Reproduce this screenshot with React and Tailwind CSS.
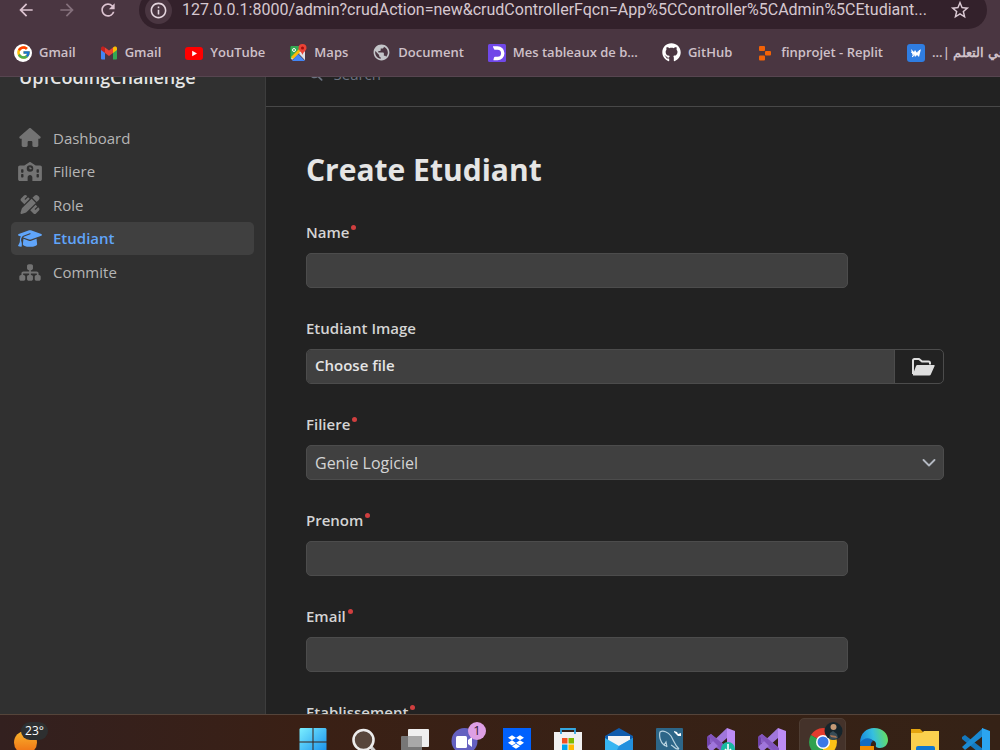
import clsx from 'clsx';
import { FaDropbox, FaGithub, FaGraduationCap, FaHouse, FaMagnifyingGlass, FaPenRuler, FaSchool, FaSitemap } from 'react-icons/fa6';
import { FcGoogle } from 'react-icons/fc';
import { MdArrowBack, MdArrowForward, MdInfoOutline, MdPublic, MdRefresh, MdStarOutline } from 'react-icons/md';

const GoogleIcon = () => (
    <span className="flex size-[18px] items-center justify-center rounded-full bg-white">
        <FcGoogle className="size-[15px]" />
    </span>
);

const GmailIcon = () => (
    <svg viewBox="0 0 18 18" className="size-[18px]">
        <path d="M1 5v9.5a1 1 0 0 0 1 1h3V8z" fill="#4285f4" />
        <path d="M17 5v9.5a1 1 0 0 1-1 1h-3V8z" fill="#34a853" />
        <path d="M1 6V4.2C1 2.6 2.8 2 4 2.8L5 3.6V9L1 6z" fill="#c5221f" />
        <path d="M17 6V4.2c0-1.600-1.800-2.200-3-1.400l-1 .8V9l4-3z" fill="#fbbc04" />
        <path d="M5 3.600l4 3 4-3V9l-4 3-4-3z" fill="#ea4335" />
    </svg>
);

const YouTubeIcon = () => (
    <svg viewBox="0 0 18 18" className="size-[18px]">
        <rect y="3" width="18" height="13" rx="3" fill="#f00" />
        <path d="M7.200 6.700v5.600l4.800-2.800z" fill="#fff" />
    </svg>
);

const MapsIcon = () => (
    <svg viewBox="0 0 18 18" className="size-[18px]">
        <path d="M2 2h11L2 14z" fill="#34a853" />
        <path d="M1 15V3l1-1v13z" fill="#1e8e3e" />
        <path d="M2 14L13 4l3 4v8l-6-7-7 7z" fill="#e8eaed" />
        <path d="M9 10l7 7H3z" fill="#4285f4" />
        <path d="M2 13L12 3l2 2L4 15z" fill="#fbbc04" />
        <path d="M10 10l6-3v9z" fill="#dfe1e5" />
        <circle cx="5" cy="6" r="1.500" fill="none" stroke="#fff" />
        <path d="M13.500 0a4 4 0 0 1 4 4c0 2.500-3 3.500-4 7-1-3.500-4-4.500-4-7a4 4 0 0 1 4-4z" fill="#ea4335" />
        <circle cx="13.500" cy="4" r="1.500" fill="#a50e0e" />
    </svg>
);

const TableauxIcon = () => (
    <svg viewBox="0 0 18 18" className="size-[18px]">
        <rect width="18" height="18" rx="1.500" fill="#7048e8" />
        <path d="M5 4h4.500a5 5 0 0 1 0 10.500H5.500" fill="none" stroke="#fff" strokeWidth="3.400" />
        <path d="M4 1v16l3-5V7z" fill="#7048e8" />
    </svg>
);

const ReplitIcon = () => (
    <svg viewBox="0 0 18 18" className="size-[18px]">
        <g fill="#f26207">
            <rect x="3" y="2" width="6" height="5" rx="1" />
            <rect x="9" y="7" width="6" height="4.500" rx="1" />
            <rect x="3" y="11.500" width="6" height="5" rx="1" />
        </g>
    </svg>
);

const CourseIcon = () => (
    <svg viewBox="0 0 18 18" className="size-[18px]">
        <rect width="18" height="18" rx="3" fill="#2f7de1" />
        <path d="M4 5l3 3 1-2 2 3 4-4-2 8-2-2-2 2-1-3-1 3z" fill="#fff" />
        <path d="M4 8l2 1M5 13l8-7" stroke="#fff" />
    </svg>
);

const bookmarks = [
    { label: 'Gmail', icon: <GoogleIcon /> },
    { label: 'Gmail', icon: <GmailIcon /> },
    { label: 'YouTube', icon: <YouTubeIcon /> },
    { label: 'Maps', icon: <MapsIcon /> },
    { label: 'Document', icon: <MdPublic className="size-[19px] text-[#c3c5c8]" /> },
    { label: 'Mes tableaux de b...', icon: <TableauxIcon /> },
    { label: 'GitHub', icon: <FaGithub className="size-[19px] text-white" /> },
    { label: 'finprojet - Replit', icon: <ReplitIcon /> },
    { label: 'في التعلم |...', icon: <CourseIcon />, rtl: true },
];

const BrowserBar = () => (
    <header className="shrink-0 overflow-hidden border-b border-[#574550] bg-[#4a3641]">
        <div className="-mt-[9px] flex h-[38px] items-center pr-[13px]">
            <div className="flex w-[139px] shrink-0 items-center gap-[21px] pl-[16px] text-[#dcc3d0]">
                <button aria-label="Back"><MdArrowBack className="size-5" /></button>
                <button aria-label="Forward" className="text-[#85717c]"><MdArrowForward className="size-5" /></button>
                <button aria-label="Reload"><MdRefresh className="size-5" /></button>
            </div>
            <div className="flex h-full min-w-0 flex-1 items-center rounded-full bg-[#33212b] pr-4 pl-1.5">
                <button aria-label="Site information" className="flex size-[27px] shrink-0 items-center justify-center rounded-full bg-[#4a3641] text-[#e4d6de]">
                    <MdInfoOutline className="size-[19px]" />
                </button>
                <input
                    aria-label="Address"
                    readOnly
                    value="127.0.0.1:8000/admin?crudAction=new&crudControllerFqcn=App%5CController%5CAdmin%5CEtudiant..."
                    className="ml-[10px] min-w-0 flex-1 bg-transparent font-[Roboto,sans-serif] text-[16px] text-[#d6c8d0] outline-none"
                />
                <button aria-label="Bookmark this page" className="text-[#dccbd5]"><MdStarOutline className="size-[22px]" /></button>
            </div>
        </div>
        <nav aria-label="Bookmarks" className="flex h-[47px] items-center gap-6 pl-[14px] text-[13px] font-semibold text-[#cfc1c9]">
            {bookmarks.map(({ label, icon, rtl }, i) => (
                <a key={i} href="#" className="flex shrink-0 items-center gap-[7px] whitespace-nowrap">
                    {icon}
                    <span dir={rtl ? 'rtl' : 'ltr'}>{label}</span>
                </a>
            ))}
        </nav>
    </header>
);

const menu = [
    { label: 'Dashboard', Icon: FaHouse },
    { label: 'Filiere', Icon: FaSchool },
    { label: 'Role', Icon: FaPenRuler },
    { label: 'Etudiant', Icon: FaGraduationCap, active: true },
    { label: 'Commite', Icon: FaSitemap },
];

const Sidebar = () => (
    <aside className="w-[266px] shrink-0 border-r border-[#3d3d3d] bg-[#303030] px-[11px]">
        <a href="#" className="-mt-3 block pl-2 text-[18px] leading-6 font-semibold text-[#e5e5e5]">UpfCodingChallenge</a>
        <nav className="mt-8 flex h-[168px] flex-col">
            {menu.map(({ label, Icon, active }) => (
                <a
                    key={label}
                    href="#"
                    className={clsx(
                        'flex flex-1 items-center gap-[11px] rounded-[5px] pl-[7px] text-[15px]',
                        active ? 'bg-[#404040] font-semibold text-[#60a5fa]' : 'text-[#b5b5b5]'
                    )}
                >
                    <Icon className={clsx('h-[19px] w-6 shrink-0', !active && 'text-[#737373]')} />
                    {label}
                </a>
            ))}
        </nav>
    </aside>
);

const Label = ({ htmlFor, required, children }) => (
    <label htmlFor={htmlFor} className="flex h-[22px] items-center text-[15px] font-semibold text-[#d4d4d4]">
        {children}
        {required && <span className="mb-[9px] ml-[2px] size-[5px] rounded-full bg-[#d03f3f]" />}
    </label>
);

const TextField = ({ id, label }) => (
    <div className="flex flex-col gap-[10px]">
        <Label htmlFor={id} required>{label}</Label>
        <input id={id} type="text" className="h-[35px] w-[85%] rounded-[5px] border border-[#4c4c4c] bg-[#404040] px-2 text-[16px] text-[#e5e5e5] outline-none" />
    </div>
);

const EtudiantForm = () => (
    <form className="mt-[30px] flex flex-col gap-[29px]">
        <TextField id="name" label="Name" />
        <div className="flex flex-col gap-[10px]">
            <Label htmlFor="image">Etudiant Image</Label>
            <div className="flex h-[35px] overflow-hidden rounded-[5px] border border-[#4c4c4c]">
                <button id="image" type="button" className="flex-1 bg-[#404040] px-2 pb-[2px] text-left text-[15px] font-semibold text-[#e5e5e5]">Choose file</button>
                <button type="button" aria-label="Browse" className="flex w-[49px] items-center justify-center border-l border-[#4c4c4c] pl-2 text-[#dedede]">
                    <svg viewBox="0 0 24 20" className="h-5 w-6">
                        <path d="M2 17V3.500Q2 2 3.500 2H8l3 2.500h6.500Q19 4.500 19 6v1.500" fill="none" stroke="currentColor" strokeWidth="2" strokeLinejoin="round" />
                        <path d="M6.500 8H23q1 0 .6 1l-3.800 8.500q-.4 1-1.500 1H2.500q-1 0-.6-1L5 9q.4-1 1.500-1z" fill="currentColor" />
                    </svg>
                </button>
            </div>
        </div>
        <div className="flex flex-col gap-[10px]">
            <Label htmlFor="filiere" required>Filiere</Label>
            <div className="grid items-center">
                <select id="filiere" className="col-start-1 row-start-1 h-[35px] appearance-none rounded-[5px] border border-[#4c4c4c] bg-[#404040] px-2 text-[16px] text-[#d4d4d4] outline-none">
                    <option>Genie Logiciel</option>
                </select>
                <svg viewBox="0 0 14 8" className="pointer-events-none col-start-1 row-start-1 mr-2 h-2 w-[14px] justify-self-end" fill="none" stroke="#b4b9c2" strokeWidth="1.800" strokeLinecap="round" strokeLinejoin="round">
                    <path d="M1.500 1l5.500 5.500L12.500 1" />
                </svg>
            </div>
        </div>
        <TextField id="prenom" label="Prenom" />
        <TextField id="email" label="Email" />
        <TextField id="etablissement" label="Etablissement" />
    </form>
);

const VsMark = () => (
    <>
        <path d="M0 9l4-3 17 14v8L0 13z" fill="#8a5fc4" />
        <path d="M0 9l3-2v13l-3-2z" fill="#6f43a8" />
        <path d="M0 19L20 0v10L4 24z" fill="#a076db" />
        <path d="M20 0l8 3v23l-8 3z" fill="#bd8cf5" />
        <path d="M1 8l3-2 17 14v8z" fill="#8355bd" />
    </>
);

const apps = [
    {
        name: 'Start',
        art: (
            <>
                <defs>
                    <linearGradient id="start" x1="0" y1="0" x2="28" y2="28" gradientUnits="userSpaceOnUse">
                        <stop stopColor="#7cf0ff" />
                        <stop offset="1" stopColor="#0f87ea" />
                    </linearGradient>
                </defs>
                <path d="M1.500 0H13.500V13.500H.5V1zM14.500 0H26.500l1 1V13.500H14.500zM.5 14.500H13.500V27.500H.5zM14.500 14.500H27.500V27.500H14.500z" fill="url(#start)" />
            </>
        ),
    },
    {
        name: 'Search',
        art: (
            <>
                <path d="M20 18l7 8" stroke="#c9c9c9" strokeWidth="3.500" />
                <circle cx="13.500" cy="12" r="10" fill="#57463c" stroke="#ececec" strokeWidth="2.600" />
            </>
        ),
    },
    {
        name: 'Task view',
        art: (
            <>
                <rect x="7" y="1" width="21" height="18" rx="1" fill="#efefef" />
                <rect y="8" width="21" height="18" rx="1" fill="#777" />
                <rect x="7" y="8" width="14" height="11" fill="#a8a8a8" />
            </>
        ),
    },
    {
        name: 'Chat',
        badge: '1',
        art: (
            <>
                <circle cx="12.500" cy="13" r="13" fill="#6460c0" />
                <rect x="4" y="8" width="11" height="12" rx="1.500" fill="#fff" />
                <path d="M16 12l4-3v10l-4-3z" fill="#fff" />
            </>
        ),
    },
    {
        name: 'Dropbox',
        art: (
            <>
                <rect width="28" height="28" fill="#0061fe" />
                <FaDropbox x="5" y="6" width="18" height="18" color="#fff" />
            </>
        ),
    },
    {
        name: 'Microsoft Store',
        art: (
            <>
                <path d="M0 4h28v22H0z" fill="#f1f1f1" />
                <path d="M7 6V1h14v5" fill="none" stroke="#35a7e0" strokeWidth="1.800" />
                <path d="M8 10h5.500v5.500H8z" fill="#f25022" />
                <path d="M14.500 10H20v5.500h-5.500z" fill="#7fba00" />
                <path d="M8 16.500h5.500V22H8z" fill="#00a4ef" />
                <path d="M14.500 16.500H20V22h-5.500z" fill="#ffb900" />
            </>
        ),
    },
    {
        name: 'Mail',
        art: (
            <>
                <path d="M0 8L14 0l14 8v14H0z" fill="#0f5cad" />
                <path d="M3 8h22v10H3z" fill="#f4f4f4" />
                <path d="M0 10l14 8 14-8v18H0z" fill="#36b5f2" />
                <path d="M14 18l14-8v18H9z" fill="#2390dd" />
            </>
        ),
    },
    {
        name: 'MySQL Workbench',
        art: (
            <>
                <rect width="27" height="28" rx="1" fill="#2d6688" />
                <path d="M8 17C4 14 3 8 4 4c3-2 8 0 11 4 3 5 3 8 8 13M8 17l2-3 1 5M11 19c-1-2-2-1-3-2M15 17c3 1 4 5 8 4" fill="none" stroke="#b8d3e0" strokeWidth="1.200" />
                <path d="M18 3l3 1 1 2 3-1v3h-3l-4-4z" fill="#fff" />
            </>
        ),
    },
    {
        name: 'Visual Studio Installer',
        art: (
            <>
                <VsMark />
                <circle cx="21" cy="21" r="7" fill="#19b9a3" />
                <path d="M21 16v8m-3-3l3 3 3-3" fill="none" stroke="#fff" strokeWidth="1.600" />
            </>
        ),
    },
    { name: 'Visual Studio', art: <VsMark /> },
    {
        name: 'Chrome',
        active: true,
        art: (
            <>
                <path d="M14 14L1.900 7A14 14 0 0 1 26.100 7z" fill="#e33b2e" />
                <path d="M14 14L1.900 7A14 14 0 0 0 14 28z" fill="#2fa14f" />
                <path d="M14 14L26.100 7A14 14 0 0 1 14 28z" fill="#fbc116" />
                <circle cx="14" cy="14" r="7" fill="#fff" />
                <circle cx="14" cy="14" r="5.500" fill="#3b78e7" />
                <circle cx="24.500" cy="3" r="9" fill="#16242b" />
                <path d="M20 11l1-6 3-2 4 3 1 4-4 2z" fill="#374c57" />
                <circle cx="24.500" cy="-1" r="3" fill="#c49a76" />
                <path d="M21 7l6 1 1 2-6-1z" fill="#aa7555" />
            </>
        ),
    },
    {
        name: 'Edge',
        art: (
            <>
                <defs>
                    <linearGradient id="edge" x1="0" y1="14" x2="28" y2="8" gradientUnits="userSpaceOnUse">
                        <stop stopColor="#1687dc" />
                        <stop offset=".5" stopColor="#35bfe0" />
                        <stop offset="1" stopColor="#67e05c" />
                    </linearGradient>
                </defs>
                <path d="M0 15C0 5 7 0 14 0c9 0 14 6 14 12 0 5-4 8-8 8-3 0-5-1-4-3 1-5-7-8-16-2z" fill="url(#edge)" />
                <path d="M0 15C3 9 11 9 13 13c-3 2-3 6 0 10l-5 5C3 26 0 21 0 15z" fill="#126cc0" />
                <rect y="18" width="14" height="10" fill="#f08c00" />
            </>
        ),
    },
    {
        name: 'File Explorer',
        art: (
            <>
                <path d="M0 1h9l3 3v6H0z" fill="#e5a50f" />
                <path d="M0 5h11l2-2h15v25H0z" fill="#fbd04e" />
                <rect x="5" y="18" width="19" height="10" rx="2" fill="#1177cf" />
            </>
        ),
    },
    {
        name: 'Visual Studio Code',
        art: (
            <>
                <path d="M0 9l3-2 18 14v7L0 11z" fill="#1478be" />
                <path d="M0 19L21 0v8L3 22z" fill="#1b8ad3" />
                <path d="M20 0l8 3v22l-8 3z" fill="#2ba5f1" />
            </>
        ),
    },
];

const Taskbar = () => (
    <footer className="flex h-9 shrink-0 overflow-hidden border-t border-[#55443a] bg-linear-to-r from-[#33201f] via-[#3a2015] via-30% to-[#352216]">
        <div className="w-[287px] shrink-0 pl-[14px]">
            <button aria-label="Weather" className="relative mt-4 block size-[23px] rounded-full bg-linear-to-b from-[#f7b32b] to-[#ee6c14]">
                <span className="absolute -top-[9px] left-[7px] flex h-[18px] w-[27px] items-center justify-center rounded-full bg-[#2d2f30] text-[12px] text-white">23°</span>
            </button>
        </div>
        {apps.map(({ name, art, badge, active }) => (
            <button
                key={name}
                aria-label={name}
                className="relative mt-[3px] flex h-12 w-[51px] shrink-0 justify-center"
            >
                {active && <span className="absolute inset-x-[2px] top-0 h-12 rounded-[5px] border border-[#4e3d33] bg-[#44322a]" />}
                <svg viewBox="0 0 28 28" className="relative mt-[10px] size-7 overflow-visible">{art}</svg>
                {badge && (
                    <span className="absolute top-[4px] right-[5px] flex size-[18px] items-center justify-center rounded-full bg-[#dd9fe4] text-[13px] text-[#35203a]">{badge}</span>
                )}
            </button>
        ))}
    </footer>
);

const App = () => (
    <div className="flex h-screen flex-col overflow-hidden bg-[#222] font-['Open_Sans','Noto_Sans',sans-serif]">
        <BrowserBar />
        <div className="flex min-h-0 flex-1 overflow-hidden">
            <Sidebar />
            <main className="min-w-0 flex-1">
                <div className="flex h-[30px] items-start border-b border-[#484848] pl-[43px] text-[#6b7280]">
                    <label className="-mt-[15px] flex flex-1 items-center gap-[11px]">
                        <FaMagnifyingGlass className="size-[14px]" />
                        <input type="search" placeholder="Search" className="w-full bg-transparent text-[15px] leading-6 outline-none placeholder:text-[#6b7280]" />
                    </label>
                </div>
                <div className="pt-[42px] pr-[56px] pl-[40px]">
                    <h1 className="text-[30px] leading-[42px] font-bold text-[#e5e5e5]">Create Etudiant</h1>
                    <EtudiantForm />
                </div>
            </main>
        </div>
        <Taskbar />
    </div>
);

export default App;
